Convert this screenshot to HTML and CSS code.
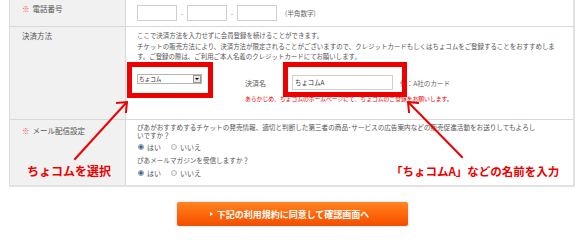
FILE: index.html
```html
<!DOCTYPE html>
<html lang="ja">
<head>
<meta charset="utf-8">
<title>会員登録</title>
<link rel="stylesheet" href="styles.css">
</head>
<body>
<div class="page">
  <div class="form">
    <div class="row row-tel">
      <div class="label"><span class="req">※</span>電話番号</div>
      <div class="cell tel">
        <span class="box"></span><span class="dash">-</span><span class="box"></span><span class="dash">-</span><span class="box"></span><span class="hint">(半角数字)</span>
      </div>
    </div>
    <div class="row row-pay">
      <div class="label">決済方法</div>
      <div class="cell">
        <p class="desc">ここで決済方法を入力せずに会員登録を続けることができます。<br>チケットの販売方法により、決済方法が限定されることがございますので、クレジットカードもしくはちょコムをご登録することをおすすめしま<br>す。ご登録の際は、ご利用ご本人名義のクレジットカードにてお願いします。</p>
        <div class="pay">
          <div class="select"><span class="sel-text">ちょコム</span><span class="drop"></span></div>
          <div class="payname">
            <div class="payline"><span class="pn">決済名</span><span class="text-in">ちょコムA</span><span class="ex">例：A社のカード</span></div>
            <p class="note">あらかじめ、ちょコムのホームページにて、ちょコムのご登録をお願いします。</p>
          </div>
        </div>
      </div>
    </div>
    <div class="row row-mail">
      <div class="label"><span class="req">※</span>メール配信設定</div>
      <div class="cell">
        <p class="q1">ぴあがおすすめするチケットの発売情報、適切と判断した第三者の商品･サービスの広告案内などの販売促進活動をお送りしてもよろし</p>
        <p class="q1b">いですか？</p>
        <div class="radios"><span class="radio on"></span><span class="rl">はい</span><span class="radio"></span><span class="rl">いいえ</span></div>
        <p class="q2">ぴあメールマガジンを受信しますか？</p>
        <div class="radios"><span class="radio on"></span><span class="rl">はい</span><span class="radio"></span><span class="rl">いいえ</span></div>
      </div>
    </div>
  </div>
  <div class="btn"><span class="tri"></span>下記の利用規約に同意して確認画面へ</div>

  <div class="mark mark1"></div>
  <div class="mark mark2"></div>
  <svg class="arrows" width="587" height="231" viewBox="0 0 587 231">
    <g stroke="#ee0000" stroke-width="2" fill="none" stroke-linecap="square">
      <line x1="75" y1="159" x2="126" y2="103"/>
      <polyline points="117,103 127,102 126,112"/>
      <line x1="462" y1="157" x2="409" y2="103"/>
      <polyline points="418,103 408,102 409,112"/>
    </g>
  </svg>
  <div class="anno anno1">ちょコムを選択</div>
  <div class="anno anno2">「ちょコムA」などの名前を入力</div>
</div>
</body>
</html>
```

FILE: styles.css
```css
html, body {
  margin: 0;
  padding: 0;
  background: #fff;
}
body {
  width: 587px;
  height: 231px;
  overflow: hidden;
  font-family: "Noto Sans CJK JP", "Noto Sans", sans-serif;
  color: #555;
}
p { margin: 0; }
.page {
  position: relative;
  width: 587px;
  height: 231px;
}
.form {
  margin-left: 9px;
  width: 566px;
  box-sizing: border-box;
  border-left: 1px solid #dcdcdc;
  border-right: 2px solid #e2e2e2;
  border-bottom: 2px solid #e2e2e2;
}
.row {
  display: grid;
  grid-template-columns: 116px 1fr;
  border-bottom: 1px solid #d8d8d8;
  box-sizing: border-box;
}
.row-tel { height: 27px; }
.row-pay { height: 93px; }
.row-mail { height: 65px; border-bottom: none; }
.label {
  background: #f1f1f1;
  border-right: 1px solid #d8d8d8;
  box-sizing: border-box;
  padding-left: 12px;
  font-size: 7.5px;
  line-height: 10px;
  color: #555;
  white-space: nowrap;
}
.row-tel .label { padding-top: 4px; }
.row-pay .label { padding-top: 4px; }
.row-mail .label { padding-top: 6px; }
.req {
  color: #e8574c;
  margin-right: 3px;
}
.cell {
  padding-left: 11px;
  background: #fff;
  font-size: 6.6px;
  white-space: nowrap;
}
.tel {
  display: flex;
  align-items: center;
  height: 16px;
  padding-top: 5px;
}
.box {
  width: 40px;
  height: 16px;
  box-sizing: border-box;
  border: 1px solid #cfcfcf;
  background: #fff;
}
.dash {
  width: 10px;
  text-align: center;
  color: #888;
  font-size: 7px;
}
.hint {
  margin-left: 8px;
  color: #666;
}
.desc {
  padding-top: 4px;
  font-size: 6.45px;
  line-height: 10.7px;
  color: #555;
}
.pay {
  display: flex;
  align-items: flex-start;
  margin-top: 11px;
}
.select {
  width: 65px;
  height: 10px;
  box-sizing: border-box;
  border: 1px solid #b5b5b5;
  display: flex;
  align-items: center;
  justify-content: space-between;
  background: #fff;
}
.sel-text {
  font-size: 5.6px;
  line-height: 8px;
  color: #222;
  padding-left: 1px;
}
.drop {
  width: 8px;
  height: 8px;
  box-sizing: border-box;
  border: 1px solid #999;
  background: #e8e8e8;
  position: relative;
}
.drop::after {
  content: "";
  position: absolute;
  left: 1px;
  top: 2px;
  border-left: 2px solid transparent;
  border-right: 2px solid transparent;
  border-top: 2px solid #000;
}
.payname {
  margin-left: 43px;
}
.payline {
  display: flex;
  align-items: center;
  margin-top: 1px;
}
.pn {
  width: 47px;
  font-size: 7px;
  color: #555;
}
.text-in {
  width: 101px;
  height: 15px;
  box-sizing: border-box;
  border: 1px solid #cfcfcf;
  font-size: 6.4px;
  line-height: 13px;
  padding-left: 2px;
  color: #333;
}
.ex {
  margin-left: 7px;
  color: #666;
}
.note {
  margin-top: 5px;
  font-size: 5.8px;
  line-height: 8px;
  color: #e60000;
}
.q1 {
  padding-top: 4px;
  line-height: 7.5px;
  color: #555;
}
.q1b {
  line-height: 7.5px;
  color: #555;
}
.radios {
  display: flex;
  align-items: center;
  height: 10px;
  margin-top: 3px;
  padding-left: 1px;
  color: #555;
}
.q2 {
  margin-top: 3px;
  line-height: 10px;
  color: #555;
}
.q2 + .radios { margin-top: 3px; }
.radio {
  width: 6px;
  height: 6px;
  box-sizing: border-box;
  border-radius: 50%;
  border: 1px solid #b8b8b8;
  background: #f4f4f4;
  margin-right: 3px;
}
.radio.on {
  background: radial-gradient(circle, #1d5e9c 0, #2a6fb0 1.4px, #cfd8e0 1.8px);
  border-color: #8a9aa8;
}
.rl {
  margin-right: 10px;
  font-size: 7px;
}
.btn {
  margin-top: 15px;
  margin-left: 177px;
  width: 231px;
  height: 24px;
  box-sizing: border-box;
  border-radius: 2px;
  background: linear-gradient(#ff8424 0%, #ff6a0c 45%, #f24e00 100%);
  box-shadow: 0 0 2px 1px #d4ecf6;
  color: #fff;
  font-weight: bold;
  font-size: 9px;
  display: flex;
  align-items: center;
  justify-content: center;
  padding-right: 6px;
  white-space: nowrap;
}
.tri {
  width: 0;
  height: 0;
  border-top: 2px solid transparent;
  border-bottom: 2px solid transparent;
  border-left: 3px solid #fff;
  margin-right: 4px;
}
.mark {
  position: absolute;
  border: 5px solid #ee0000;
  box-sizing: border-box;
}
.mark1 { left: 127px; top: 62px; width: 86px; height: 36px; }
.mark2 { left: 283px; top: 62px; width: 124px; height: 35px; }
.arrows {
  position: absolute;
  left: 0;
  top: 0;
}
.anno {
  position: absolute;
  color: #ee0000;
  font-weight: bold;
  white-space: nowrap;
  line-height: 14px;
}
.anno1 { left: 27px; top: 164px; font-size: 12px; }
.anno2 { left: 391px; top: 164px; font-size: 11.5px; }
```
